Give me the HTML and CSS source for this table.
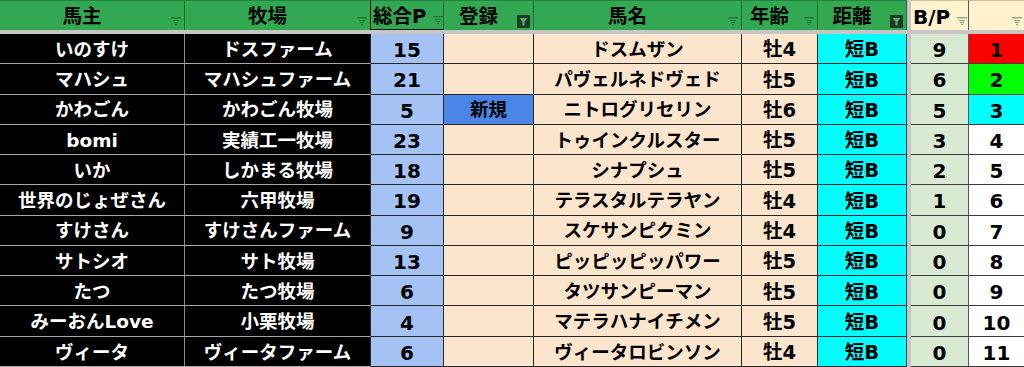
FILE: index.html
```html
<!DOCTYPE html>
<html lang="ja">
<head>
<meta charset="utf-8">
<title>馬一覧</title>
<link rel="stylesheet" href="styles.css">
</head>
<body>
<div class="sheet">
  <div class="row head">
    <div class="hcell"><span class="htext">馬主</span><svg class="fi" viewBox="0 0 10 9"><rect x="0" y="0" width="10" height="1.4"/><rect x="2" y="3" width="6" height="1.2"/><rect x="3" y="5" width="4" height="1.2"/><rect x="4" y="7" width="2" height="1.2"/></svg></div>
    <div class="hcell"><span class="htext">牧場</span><svg class="fi" viewBox="0 0 10 9"><rect x="0" y="0" width="10" height="1.4"/><rect x="2" y="3" width="6" height="1.2"/><rect x="3" y="5" width="4" height="1.2"/><rect x="4" y="7" width="2" height="1.2"/></svg></div>
    <div class="hcell sel"><span class="htext left">総合P</span><svg class="fi" viewBox="0 0 10 9"><rect x="0" y="0" width="10" height="1.4"/><rect x="2" y="3" width="6" height="1.2"/><rect x="3" y="5" width="4" height="1.2"/><rect x="4" y="7" width="2" height="1.2"/></svg></div>
    <div class="hcell"><span class="htext">登録</span><svg class="fa" viewBox="0 0 13 13"><rect width="13" height="13" rx="1"/><polygon points="2.5,3 10.5,3 7.6,6.6 7.6,10.5 5.4,10.5 5.4,6.6"/></svg></div>
    <div class="hcell"><span class="htext">馬名</span><svg class="fi" viewBox="0 0 10 9"><rect x="0" y="0" width="10" height="1.4"/><rect x="2" y="3" width="6" height="1.2"/><rect x="3" y="5" width="4" height="1.2"/><rect x="4" y="7" width="2" height="1.2"/></svg></div>
    <div class="hcell"><span class="htext">年齢</span><svg class="fi" viewBox="0 0 10 9"><rect x="0" y="0" width="10" height="1.4"/><rect x="2" y="3" width="6" height="1.2"/><rect x="3" y="5" width="4" height="1.2"/><rect x="4" y="7" width="2" height="1.2"/></svg></div>
    <div class="hcell"><span class="htext">距離</span><svg class="fa" viewBox="0 0 13 13"><rect width="13" height="13" rx="1"/><polygon points="2.5,3 10.5,3 7.6,6.6 7.6,10.5 5.4,10.5 5.4,6.6"/></svg></div>
    <div class="gap"></div>
    <div class="hcell cream"><span class="htext left">B/P</span><svg class="fi" viewBox="0 0 10 9"><rect x="0" y="0" width="10" height="1.4"/><rect x="2" y="3" width="6" height="1.2"/><rect x="3" y="5" width="4" height="1.2"/><rect x="4" y="7" width="2" height="1.2"/></svg></div>
    <div class="hcell cream last"><span class="htext"></span><svg class="fi" viewBox="0 0 10 9"><rect x="0" y="0" width="10" height="1.4"/><rect x="2" y="3" width="6" height="1.2"/><rect x="3" y="5" width="4" height="1.2"/><rect x="4" y="7" width="2" height="1.2"/></svg></div>
  </div>
  <div class="sep"></div>

  <div class="row data">
    <div class="cell owner">いのすけ</div><div class="cell farm">ドスファーム</div><div class="cell pts">15</div><div class="cell reg"></div><div class="cell name">ドスムザン</div><div class="cell age">牡4</div><div class="cell dist">短B</div><div class="gap"></div><div class="cell bp">9</div><div class="cell rank r1">1</div>
  </div>
  <div class="row data">
    <div class="cell owner">マハシュ</div><div class="cell farm">マハシュファーム</div><div class="cell pts">21</div><div class="cell reg"></div><div class="cell name">パヴェルネドヴェド</div><div class="cell age">牡5</div><div class="cell dist">短B</div><div class="gap"></div><div class="cell bp">6</div><div class="cell rank r2">2</div>
  </div>
  <div class="row data">
    <div class="cell owner">かわごん</div><div class="cell farm">かわごん牧場</div><div class="cell pts">5</div><div class="cell reg new">新規</div><div class="cell name">ニトログリセリン</div><div class="cell age">牡6</div><div class="cell dist">短B</div><div class="gap"></div><div class="cell bp">5</div><div class="cell rank r3">3</div>
  </div>
  <div class="row data">
    <div class="cell owner">bomi</div><div class="cell farm">実績工一牧場</div><div class="cell pts">23</div><div class="cell reg"></div><div class="cell name">トゥインクルスター</div><div class="cell age">牡5</div><div class="cell dist">短B</div><div class="gap"></div><div class="cell bp">3</div><div class="cell rank">4</div>
  </div>
  <div class="row data">
    <div class="cell owner">いか</div><div class="cell farm">しかまる牧場</div><div class="cell pts">18</div><div class="cell reg"></div><div class="cell name">シナプシュ</div><div class="cell age">牡5</div><div class="cell dist">短B</div><div class="gap"></div><div class="cell bp">2</div><div class="cell rank">5</div>
  </div>
  <div class="row data">
    <div class="cell owner">世界のじょぜさん</div><div class="cell farm">六甲牧場</div><div class="cell pts">19</div><div class="cell reg"></div><div class="cell name">テラスタルテラヤン</div><div class="cell age">牡4</div><div class="cell dist">短B</div><div class="gap"></div><div class="cell bp">1</div><div class="cell rank">6</div>
  </div>
  <div class="row data">
    <div class="cell owner">すけさん</div><div class="cell farm">すけさんファーム</div><div class="cell pts">9</div><div class="cell reg"></div><div class="cell name">スケサンピクミン</div><div class="cell age">牡4</div><div class="cell dist">短B</div><div class="gap"></div><div class="cell bp">0</div><div class="cell rank">7</div>
  </div>
  <div class="row data">
    <div class="cell owner">サトシオ</div><div class="cell farm">サト牧場</div><div class="cell pts">13</div><div class="cell reg"></div><div class="cell name">ピッピッピッパワー</div><div class="cell age">牡5</div><div class="cell dist">短B</div><div class="gap"></div><div class="cell bp">0</div><div class="cell rank">8</div>
  </div>
  <div class="row data">
    <div class="cell owner">たつ</div><div class="cell farm">たつ牧場</div><div class="cell pts">6</div><div class="cell reg"></div><div class="cell name">タツサンピーマン</div><div class="cell age">牡5</div><div class="cell dist">短B</div><div class="gap"></div><div class="cell bp">0</div><div class="cell rank">9</div>
  </div>
  <div class="row data">
    <div class="cell owner">みーおんLove</div><div class="cell farm">小栗牧場</div><div class="cell pts">4</div><div class="cell reg"></div><div class="cell name">マテラハナイチメン</div><div class="cell age">牡5</div><div class="cell dist">短B</div><div class="gap"></div><div class="cell bp">0</div><div class="cell rank">10</div>
  </div>
  <div class="row data">
    <div class="cell owner">ヴィータ</div><div class="cell farm">ヴィータファーム</div><div class="cell pts">6</div><div class="cell reg"></div><div class="cell name">ヴィータロビンソン</div><div class="cell age">牡4</div><div class="cell dist">短B</div><div class="gap"></div><div class="cell bp">0</div><div class="cell rank">11</div>
  </div>
</div>
</body>
</html>
```
FILE: styles.css
```css
* { box-sizing: border-box; margin: 0; padding: 0; }
html, body { background: #ffffff; }
body {
  width: 1024px;
  height: 367px;
  overflow: hidden;
  font-family: "DejaVu Sans", "Noto Sans CJK JP", sans-serif;
  font-weight: 700;
}
.sheet { display: flex; flex-direction: column; width: 1024px; }
.row {
  display: grid;
  grid-template-columns: 185px 186px 73px 90px 208px 76px 89px 4px 58px 55px;
}
.head { height: 30px; }
.data { height: 30.27px; }
.sep { height: 4px; background: #c6c6c6; }
.gap { background: #c6c6c6; }

/* header */
.hcell {
  display: flex;
  align-items: center;
  background: #33a852;
  border-top: 1px solid #24843f;
  border-right: 1px solid #1f6a36;
  font-size: 19.5px;
  line-height: 1;
  color: #000;
  overflow: hidden;
}
.htext {
  flex: 1;
  text-align: center;
  padding-top: 3px;
  white-space: nowrap;
}
.htext.left { text-align: left; padding-left: 2px; }
.hcell.sel {
  border-left: 1px solid #1a1a1a;
  border-bottom: 1px solid #1a1a1a;
  margin-left: -1px;
}
.hcell.cream { background: #fff2cc; border-top-color: #c9bf9f; border-right-color: #555555; }
.cream .htext.left { font-size: 20px; }
.hcell.last { border-right: none; }
.fi {
  width: 10px;
  height: 9px;
  flex: none;
  align-self: flex-end;
  margin: 0 3px 4px 7px;
  fill: #1f7a3a;
}
.cream .fi { fill: #93a486; margin-right: 5px; }
.cream.last .fi { margin-right: 2px; }
.fa {
  width: 13px;
  height: 13px;
  flex: none;
  align-self: flex-end;
  margin: 0 3px 2px 4px;
}
.fa rect { fill: #1b3b24; }
.fa polygon { fill: #57b06d; }

/* data cells */
.cell {
  display: flex;
  align-items: center;
  justify-content: center;
  white-space: nowrap;
  overflow: hidden;
  border-right: 1px solid #262626;
  border-bottom: 1px solid #262626;
  font-size: 18.5px;
  line-height: 1;
  padding-top: 3px;
  color: #000;
}
.owner {
  background: #000;
  color: #fff;
  border-right: 1px solid #8c8c8c;
  border-bottom-color: #a8a8a8;
}
.farm {
  background: #000;
  color: #fff;
  border-bottom-color: #a8a8a8;
}
.pts { background: #a4c2f4; font-size: 20px; }
.reg { background: #fce5cd; }
.reg.new { background: #4a86e8; }
.name { background: #fce5cd; }
.age { background: #fce5cd; font-size: 19.5px; }
.dist { background: #00ffff; border-right-color: #1f4a4a; font-size: 19.5px; }
.bp { background: #d9ead3; border-bottom-color: #3c3c3c; border-right-color: #555555; font-size: 20px; }
.rank { background: #ffffff; border-right: none; border-bottom-color: #3c3c3c; font-size: 20px; }
.rank.r1 { background: #ff0000; }
.rank.r2 { background: #00ff00; }
.rank.r3 { background: #00ffff; }
```
